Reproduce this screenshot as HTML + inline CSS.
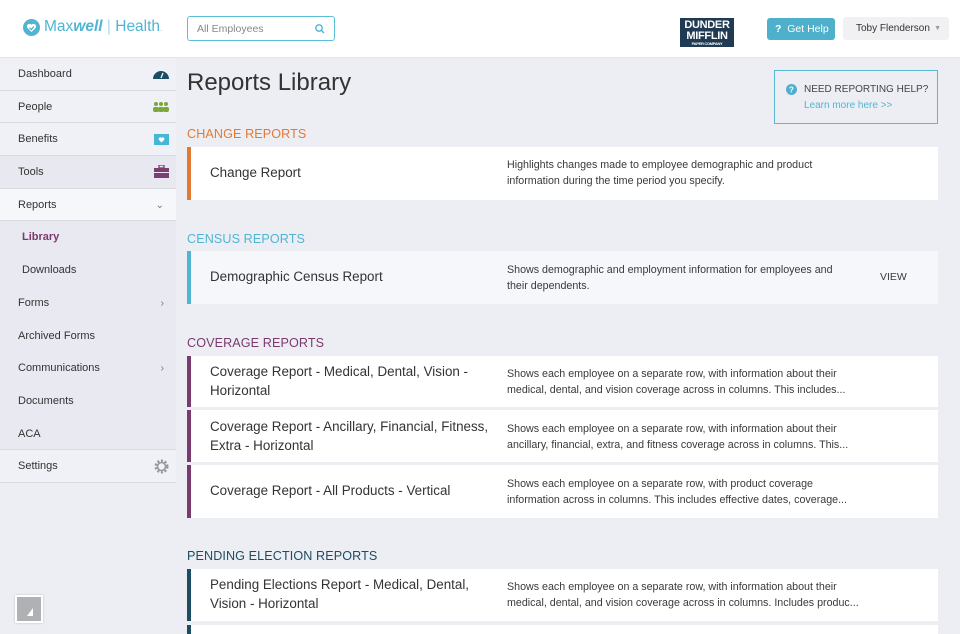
<!DOCTYPE html>
<html><head><meta charset="utf-8"><style>
*{margin:0;padding:0;box-sizing:border-box}
html,body{width:960px;height:634px;overflow:hidden}
body{background:#edeef4;font-family:"Liberation Sans",sans-serif;color:#3a3a3a;position:relative}
.hdr{position:absolute;left:0;top:0;width:960px;height:58px;background:#fff;border-bottom:1px solid #e3e4ea}
.abs{position:absolute}
.side{position:absolute;left:0;top:58px;width:176px}
.nav{height:32.7px;border-bottom:1px solid #d9dae0;font-size:11px;padding-left:18px;line-height:33px;position:relative;background:#f0f1f6;color:#333}
.nav.sub{background:#e8e9f1;border-bottom:none;padding-left:22px}
.nav.plain{background:#e8e9f1;border-bottom:none}
.nav .ic{position:absolute;right:6px;top:0}
.chev{position:absolute;right:12px;top:0;color:#777;font-size:10px}
.sec{position:absolute;left:187px;font-size:12.6px;letter-spacing:.1px}
.card{position:absolute;left:187px;width:751px;background:#fff;border-left:4px solid}
.card .t{position:absolute;left:19px;font-size:13.4px;color:#333;line-height:18.5px}
.card .d{position:absolute;left:316px;font-size:10.7px;color:#3a3a3a;line-height:16px;width:355px}
</style></head><body>
<div class="hdr">
  <svg class="abs" style="left:23px;top:19px" width="17" height="17" viewBox="0 0 17 17"><circle cx="8.5" cy="8.5" r="8.5" fill="#4fb5d2"/><path d="M8.5 13 L4.5 9 A2.3 2.3 0 0 1 8.5 5.8 A2.3 2.3 0 0 1 12.5 9 Z" fill="#fff"/><path d="M6.5 8.8 L8.3 10.5 L10.8 7.5" stroke="#4fb5d2" stroke-width="1.3" fill="none"/></svg>
  <div class="abs" style="left:44px;top:18px;font-size:15.5px;color:#4fb5d2">Max<i style="font-weight:bold">well</i> <span style="color:#a9d9e7">|</span> Health<span style="font-size:7px">.</span></div>
  <div class="abs" style="left:187px;top:16px;width:148px;height:25px;border:1px solid #5bbfd8;border-radius:3px;font-size:10.5px;color:#888;padding:6px 9px">All Employees
    <svg class="abs" style="right:9px;top:7px" width="10" height="10" viewBox="0 0 10 10"><circle cx="4" cy="4" r="3.2" stroke="#4fb5d2" stroke-width="1.4" fill="none"/><path d="M6.4 6.4L9 9" stroke="#4fb5d2" stroke-width="1.5"/></svg></div>
  <div class="abs" style="left:680px;top:18px;width:54px;height:29px;background:#1f3a52;color:#fff;font-weight:bold;font-size:11px;line-height:10.5px;text-align:center;padding-top:2px;letter-spacing:-.3px">DUNDER<br>MIFFLIN<span style="font-size:4px;display:block;line-height:5px">PAPER COMPANY</span></div>
  <div class="abs" style="left:767px;top:18px;width:68px;height:22px;background:#4fb0cc;border-radius:3px;color:#fff;font-size:10.5px;line-height:22px;padding-left:8px"><b>?</b>&nbsp; Get Help</div>
  <div class="abs" style="left:843px;top:17px;width:106px;height:23px;background:#f1f1f3;border-radius:3px;font-size:10px;line-height:23px;padding-left:13px;color:#333">Toby Flenderson <span style="position:absolute;right:8px;color:#999;font-size:7px">▼</span></div>
</div>

<div class="side">
  <div class="nav">Dashboard<svg class="ic" style="top:10px" width="18" height="12" viewBox="0 0 18 12"><path d="M1 11A8 8 0 0 1 17 11Z" fill="#1d4d63"/><path d="M9 10L11 5" stroke="#fff" stroke-width="1.2"/></svg></div>
  <div class="nav">People<svg class="ic" style="top:10px" width="18" height="12" viewBox="0 0 18 12"><g fill="#7aa83a"><circle cx="4" cy="3" r="2"/><circle cx="9" cy="3" r="2"/><circle cx="14" cy="3" r="2"/><rect x="1" y="6" width="6" height="5" rx="2"/><rect x="6" y="6" width="6" height="5" rx="2"/><rect x="11" y="6" width="6" height="5" rx="2"/></g></svg></div>
  <div class="nav">Benefits<svg class="ic" style="top:11px;right:7px" width="15" height="11" viewBox="0 0 15 11"><rect width="15" height="11" fill="#45b6d3"/><path d="M7.5 8.5L5 6A1.3 1.3 0 0 1 7.5 4A1.3 1.3 0 0 1 10 6Z" fill="#fff"/></svg></div>
  <div class="nav" style="background:#e8e9f0">Tools<svg class="ic" style="top:9px;right:7px" width="15" height="13" viewBox="0 0 15 13"><rect x="0" y="3" width="15" height="10" fill="#7d3f72"/><rect x="5" y="0" width="5" height="3" fill="none" stroke="#7d3f72" stroke-width="1.3"/><rect x="0" y="7" width="15" height="1" fill="#e8e9f0"/></svg></div>
  <div class="nav" style="background:#f6f7fa">Reports<span class="chev">⌄</span></div>
  <div class="nav sub" style="color:#7b3a6f;font-weight:bold">Library</div>
  <div class="nav sub">Downloads</div>
  <div class="nav plain">Forms<span class="chev">›</span></div>
  <div class="nav plain">Archived Forms</div>
  <div class="nav plain">Communications<span class="chev">›</span></div>
  <div class="nav plain">Documents</div>
  <div class="nav plain" style="border-bottom:1px solid #d9dae0">ACA</div>
  <div class="nav">Settings<svg class="ic" style="top:9px;right:7px" width="15" height="15" viewBox="0 0 15 15"><circle cx="7.5" cy="7.5" r="5.5" fill="none" stroke="#999" stroke-width="3" stroke-dasharray="2 1.6"/><circle cx="7.5" cy="7.5" r="4" fill="none" stroke="#999" stroke-width="1.6"/></svg></div>
</div>
<div class="abs" style="left:15px;top:595px;width:28px;height:28px;background:#b0b1b5;border:2px solid #fff;box-shadow:0 0 2px #bbb"><svg width="24" height="24" viewBox="0 0 24 24"><path d="M10 19L16 11V19Z" fill="#fff"/></svg></div>

<div class="abs" style="left:187px;top:69px;font-size:24px;color:#333">Reports Library</div>
<div class="abs" style="left:774px;top:70px;width:164px;height:54px;border:1px solid #5bb8d0;padding:11px 0 0 29px;font-size:10px;line-height:15.5px;color:#444;white-space:nowrap">
  <svg class="abs" style="left:11px;top:13px" width="11" height="11" viewBox="0 0 11 11"><circle cx="5.5" cy="5.5" r="5.5" fill="#4fb0cc"/><text x="5.5" y="8.5" font-size="8" font-weight="bold" fill="#fff" text-anchor="middle" font-family="Liberation Sans">?</text></svg>
  NEED REPORTING HELP?<br><span style="color:#4fb5d2">Learn more here &gt;&gt;</span></div>

<div class="sec" style="top:127px;color:#e27a33">CHANGE REPORTS</div>
<div class="card" style="top:147px;height:53px;border-color:#e27a33"><div class="t" style="top:17px">Change Report</div><div class="d" style="top:10px">Highlights changes made to employee demographic and product information during the time period you specify.</div></div>

<div class="sec" style="top:232px;color:#4fb5d2">CENSUS REPORTS</div>
<div class="card" style="top:251px;height:53px;border-color:#4fb5d2;background:#f6f7fb"><div class="t" style="top:17px">Demographic Census Report</div><div class="d" style="top:11px;width:345px">Shows demographic and employment information for employees and their dependents.</div><div class="abs" style="left:689px;top:20px;font-size:10.5px">VIEW</div></div>

<div class="sec" style="top:336px;color:#7b3a6f">COVERAGE REPORTS</div>
<div class="card" style="top:356px;height:51px;border-color:#7b3a6f"><div class="t" style="top:7px">Coverage Report - Medical, Dental, Vision -<br>Horizontal</div><div class="d" style="top:10px">Shows each employee on a separate row, with information about their medical, dental, and vision coverage across in columns. This includes...</div></div>
<div class="card" style="top:410px;height:52px;border-color:#7b3a6f"><div class="t" style="top:8px">Coverage Report - Ancillary, Financial, Fitness,<br>Extra - Horizontal</div><div class="d" style="top:11px">Shows each employee on a separate row, with information about their ancillary, financial, extra, and fitness coverage across in columns. This...</div></div>
<div class="card" style="top:465px;height:53px;border-color:#7b3a6f"><div class="t" style="top:17px">Coverage Report - All Products - Vertical</div><div class="d" style="top:11px">Shows each employee on a separate row, with product coverage information across in columns. This includes effective dates, coverage...</div></div>

<div class="sec" style="top:549px;color:#1d4d63">PENDING ELECTION REPORTS</div>
<div class="card" style="top:569px;height:52px;border-color:#1d4d63"><div class="t" style="top:7px">Pending Elections Report - Medical, Dental,<br>Vision - Horizontal</div><div class="d" style="top:10px">Shows each employee on a separate row, with information about their medical, dental, and vision coverage across in columns. Includes produc...</div></div>
<div class="card" style="top:625px;height:9px;border-color:#1d4d63"></div>
</body></html>
